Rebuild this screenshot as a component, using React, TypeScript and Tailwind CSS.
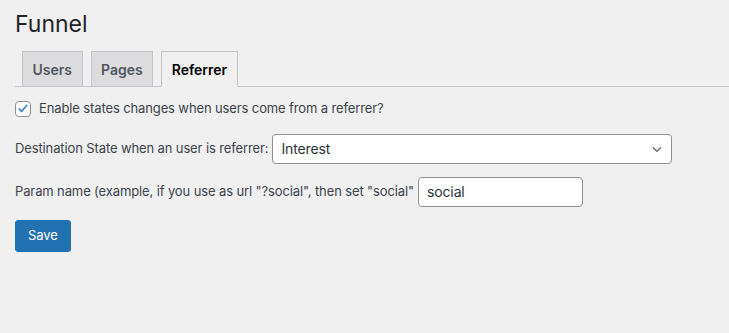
import React, { useState } from 'react';

const tabs = ['Users', 'Pages', 'Referrer'];

const App = () => {
  const [active, setActive] = useState('Referrer');
  const [enabled, setEnabled] = useState(true);
  const [param, setParam] = useState('social');

  return (
    <div className="min-h-[333px] w-full bg-[#f0f0f1] text-[#3c434a] font-['Inter','Liberation_Sans',sans-serif] text-[13px] tracking-[-0.12px]">
      <div className="pl-[15px]">
        <h1 className="pt-[9px] text-[23px] leading-[30px] font-normal tracking-normal text-[#1d2327]">Funnel</h1>

        <div className="mt-[12px] flex items-end gap-[8px] border-b border-[#c3c4c7] pl-[7px]">
          {tabs.map(tab => (
            <button
              key={tab}
              onClick={() => setActive(tab)}
              className={`-mb-px h-[36px] border border-[#c3c4c7] px-[9.5px] text-[14px] font-semibold tracking-normal ${
                active === tab
                  ? 'border-b-[#f0f0f1] bg-[#f0f0f1] text-black'
                  : 'bg-[#dcdcde] text-[#50575e]'
              }`}
            >
              {tab}
            </button>
          ))}
        </div>

        <div className="mt-[12px] flex items-center gap-[8px]">
          <button
            onClick={() => setEnabled(!enabled)}
            className="flex h-[16px] w-[16px] items-center justify-center rounded-[4px] border border-[#8c8f94] bg-white"
          >
            {enabled && (
              <svg viewBox="0 0 20 20" className="h-[17px] w-[17px]">
                <path d="M4.5 10.5l3.5 3.6 7.5-8.6" fill="none" stroke="#3582c4" strokeWidth="2.2" strokeLinecap="round" strokeLinejoin="round" />
              </svg>
            )}
          </button>
          <span>Enable states changes when users come from a referrer?</span>
        </div>

        <div className="mt-[15px] flex items-center gap-[4px]">
          <span>Destination State when an user is referrer:</span>
          <div className="flex h-[30px] w-[400px] items-center justify-between rounded-[4px] border border-[#8c8f94] bg-white pl-[8px] pr-[6px] text-[14px] text-[#2c3338]">
            <span>Interest</span>
            <svg viewBox="0 0 20 20" className="h-[16px] w-[16px]">
              <path d="M5 8l5 5 5-5" fill="none" stroke="#50575e" strokeWidth="1.6" />
            </svg>
          </div>
        </div>

        <div className="mt-[13px] flex items-center gap-[4px]">
          <span>Param name (example, if you use as url "?social", then set "social"</span>
          <input
            value={param}
            onChange={e => setParam(e.target.value)}
            className="h-[30px] w-[165px] rounded-[4px] border border-[#8c8f94] bg-white px-[8px] text-[14px] text-[#2c3338] outline-none"
          />
        </div>

        <button className="mt-[13px] h-[32px] rounded-[3px] border border-[#2271b1] bg-[#2271b1] px-[12px] text-[13px] text-white">
          Save
        </button>
      </div>
    </div>
  );
};

export default App;
